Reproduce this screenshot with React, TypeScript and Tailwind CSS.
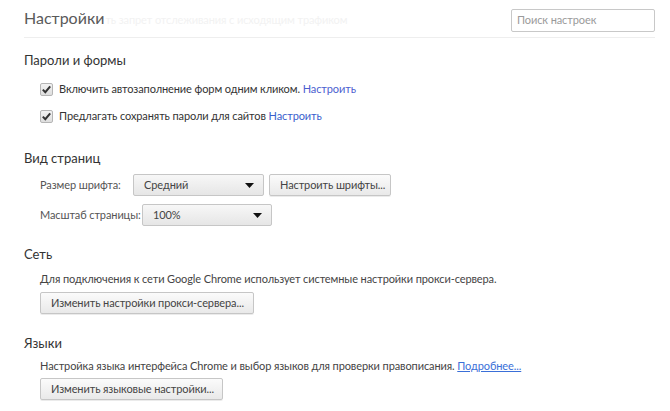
import React from "react";

const font = "font-['Segoe_UI','Lato','Noto_Sans',sans-serif]";

function Checkbox() {
  return (
    <span className="flex h-[13px] w-[13px] items-center justify-center rounded-[2px] border border-[#b5b5b5] bg-gradient-to-b from-[#f2f2f2] to-[#dedede]">
      <svg width="11" height="11" viewBox="0 0 11 11">
        <path d="M1.8 5.6 L4.3 8.2 L9.2 2.4" fill="none" stroke="#333" strokeWidth="2" />
      </svg>
    </span>
  );
}

function Button({ children, className = "" }: { children: React.ReactNode; className?: string }) {
  return (
    <div
      className={`flex h-[22px] items-center whitespace-nowrap rounded-[2px] border border-[#c6c6c6] bg-gradient-to-b from-[#fbfbfb] to-[#e9e9e9] px-[10px] text-[#444] shadow-[0_1px_0_rgba(0,0,0,0.08)] ${className}`}
    >
      {children}
    </div>
  );
}

function Select({ value, className = "" }: { value: string; className?: string }) {
  return (
    <div
      className={`flex h-[22px] items-center justify-between rounded-[2px] border border-[#c6c6c6] bg-gradient-to-b from-[#f7f7f7] to-[#e6e6e6] pl-[10px] pr-[9px] text-[#444] ${className}`}
    >
      <span>{value}</span>
      <svg width="9" height="5" viewBox="0 0 9 5">
        <path d="M0 0 H9 L4.5 5 Z" fill="#111" />
      </svg>
    </div>
  );
}

export default function App() {
  return (
    <div className={`h-[411px] w-[670px] overflow-hidden whitespace-nowrap bg-white pl-[24px] pr-[15px] ${font} text-[11px] leading-[20px] tracking-[-0.1px] text-[#333]`}>
      <div className="flex h-[38px] items-center justify-between border-b border-[#eeeeee]">
        <div className="flex items-baseline">
          <span className="text-[16px] tracking-normal text-[#5a5a5a]">Настройки</span>
          <span className="ml-[1px] text-[11px] text-[#f2f2f2]">ть запрет отслеживания с исходящим трафиком</span>
        </div>
        <div className="mt-[3px] flex h-[23px] w-[144px] items-center rounded-[2px] border border-[#c8c8c8] px-[5px] text-[#9a9a9a]">
          Поиск настроек
        </div>
      </div>

      <div className="mt-[12px] h-[20px] text-[13px] tracking-normal text-[#333]">Пароли и формы</div>
      <div className="ml-[16px] mt-[9px] flex h-[20px] items-center gap-[6px]">
        <Checkbox />
        <span>
          Включить автозаполнение форм одним кликом. <span className="text-[#4c5fd0]">Настроить</span>
        </span>
      </div>
      <div className="ml-[16px] mt-[7px] flex h-[20px] items-center gap-[6px]">
        <Checkbox />
        <span>
          Предлагать сохранять пароли для сайтов <span className="text-[#3a5fcd]">Настроить</span>
        </span>
      </div>

      <div className="mt-[22px] h-[20px] text-[13px] tracking-normal text-[#333]">Вид страниц</div>
      <div className="ml-[16px] mt-[6px] flex h-[22px] items-center">
        <span className="w-[93px] text-[#555]">Размер шрифта:</span>
        <Select value="Средний" className="w-[131px]" />
        <Button className="ml-[5px] w-[122px]">Настроить шрифты...</Button>
      </div>
      <div className="ml-[16px] mt-[8px] flex h-[22px] items-center">
        <span className="w-[102px] text-[#555]">Масштаб страницы:</span>
        <Select value="100%" className="w-[130px]" />
      </div>

      <div className="mt-[18px] h-[20px] text-[13px] tracking-normal text-[#333]">Сеть</div>
      <div className="ml-[16px] mt-[5px] h-[20px] text-[#444]">
        Для подключения к сети Google Chrome использует системные настройки прокси-сервера.
      </div>
      <div className="ml-[16px] mt-[3px] flex">
        <Button className="w-[214px]">Изменить настройки прокси-сервера...</Button>
      </div>

      <div className="mt-[19px] h-[20px] text-[13px] tracking-normal text-[#333]">Языки</div>
      <div className="ml-[16px] mt-[3px] h-[20px] text-[#444]">
        Настройка языка интерфейса Chrome и выбор языков для проверки правописания.{" "}
        <span className="text-[#3a6fd8] underline">Подробнее...</span>
      </div>
      <div className="ml-[16px] mt-[2px] flex">
        <Button className="w-[183px]">Изменить языковые настройки...</Button>
      </div>
    </div>
  );
}
